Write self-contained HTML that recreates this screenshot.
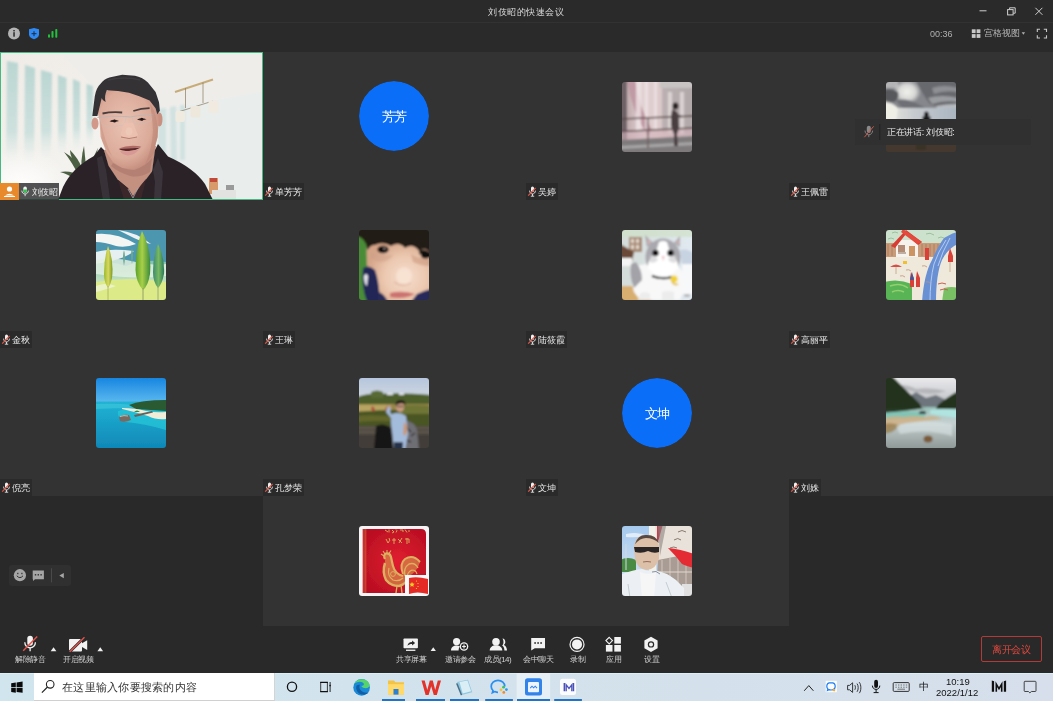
<!DOCTYPE html>
<html><head><meta charset="utf-8">
<style>
*{margin:0;padding:0;box-sizing:border-box}
html,body{width:1053px;height:701px;overflow:hidden;background:#292929;font-family:"Liberation Sans",sans-serif;position:relative}
.abs{position:absolute}
#title{left:0;top:0;width:1053px;height:22px;background:#2a2a2a}
#titleline{left:0;top:22px;width:1053px;height:1px;background:#323232}
#toolbar{left:0;top:23px;width:1053px;height:29px;background:#2a2a2a}
.t{position:absolute;white-space:nowrap;line-height:1;will-change:transform}
.tile{position:absolute;background:#333333;width:263px;height:148px}
.av{position:absolute;width:70px;height:70px;border-radius:3px;overflow:hidden}
.lbl{position:absolute;height:17px;background:#2a2a2a;color:#e8e8e8;font-size:9px;line-height:19px;padding:0 2.5px 0 11.5px;white-space:nowrap;will-change:transform}
.lbl svg{position:absolute;left:1px;top:3px}
#bottombar{left:0;top:626px;width:1053px;height:47px;background:#292929}
.bl{font-size:8px;letter-spacing:-0.5px;color:#cfcfcf}
#taskbar{left:0;top:673px;width:1053px;height:28px;background:linear-gradient(90deg,#d0e5ee 0%,#d3e2ec 50%,#d6dfeb 100%);border-top:1px solid #d9eef7}
</style></head>
<body>
<div id="title" class="abs"></div>
<div class="t" style="left:488px;top:8px;font-size:9px;letter-spacing:0.5px;color:#dcdcdc">刘伎昭的快速会议</div>
<svg class="abs" style="left:975px;top:4px" width="75" height="16" viewBox="975 4 75 16">
 <line x1="979.5" y1="10.8" x2="986.5" y2="10.8" stroke="#cfcfcf" stroke-width="1"/>
 <rect x="1007.6" y="9.6" width="5.5" height="5.3" fill="none" stroke="#cfcfcf" stroke-width="1"/>
 <path d="M1009.6 9.6V7.8h5.6v5.4h-2" fill="none" stroke="#cfcfcf" stroke-width="1"/>
 <path d="M1035.4 7.8l7 7M1042.4 7.8l-7 7" stroke="#cfcfcf" stroke-width="1"/>
</svg>
<div id="titleline" class="abs"></div>
<div id="toolbar" class="abs"></div>
<svg class="abs" style="left:0;top:23px" width="70" height="29" viewBox="0 23 70 29">
 <circle cx="14" cy="33.5" r="6" fill="#b4b4b4"/>
 <rect x="13.2" y="32.2" width="1.7" height="4.5" fill="#3a3a3a"/>
 <rect x="13.2" y="30" width="1.7" height="1.4" fill="#3a3a3a"/>
 <path d="M29 29.2 L34 28 L39 29.2 V34.5 C39 37 36.5 38.5 34 39.2 C31.5 38.5 29 37 29 34.5Z" fill="#2f8af5"/>
 <path d="M34 31.2V36.2M31.5 33.7H36.5" stroke="#1c2b3d" stroke-width="1"/>
 <rect x="48" y="34.2" width="2" height="3.6" rx="1" fill="#22c33c"/>
 <rect x="51.5" y="31" width="2" height="6.8" rx="0.8" fill="#22c33c"/>
 <rect x="55.3" y="28.9" width="2" height="8.9" rx="0.8" fill="#22c33c"/>
</svg>
<div class="t" style="left:930px;top:30px;font-size:9px;color:#b0b0b0">00:36</div>
<svg class="abs" style="left:970px;top:27px" width="80" height="14" viewBox="970 27 80 14">
 <rect x="971.8" y="29.3" width="3.8" height="3.8" fill="#c8c8c8"/>
 <rect x="976.6" y="29.3" width="3.8" height="3.8" fill="#c8c8c8"/>
 <rect x="971.8" y="34.1" width="3.8" height="3.8" fill="#c8c8c8"/>
 <rect x="976.6" y="34.1" width="3.8" height="3.8" fill="#c8c8c8"/>
 <path d="M1021.7 32.2h3.4l-1.7 2.5z" fill="#b0b0b0"/>
 <path d="M1037.3 32V29.3H1040M1043.8 29.3H1046.5V32M1046.5 35.3V38H1043.8M1040 38H1037.3V35.3" fill="none" stroke="#c8c8c8" stroke-width="1.1"/>
</svg>
<div class="t" style="left:984px;top:29px;font-size:8.5px;color:#b8b8b8">宫格视图</div>

<div class="abs" style="left:263px;top:52px;width:1px;height:574px;background:#2f2f2f"></div>
<div class="abs" style="left:526px;top:52px;width:1px;height:574px;background:#2f2f2f"></div>
<div class="abs" style="left:789px;top:52px;width:1px;height:444px;background:#2f2f2f"></div>
<div class="abs" style="left:0;top:199px;width:1053px;height:1px;background:#2f2f2f"></div>
<div class="abs" style="left:0;top:347px;width:1053px;height:1px;background:#2f2f2f"></div>
<div class="abs" style="left:263px;top:495px;width:526px;height:1px;background:#2f2f2f"></div>

<!-- VIDEO TILE -->
<svg class="abs" style="left:0;top:52px" width="263" height="148" viewBox="0 52 263 148">
 <defs>
  <linearGradient id="vbg" x1="0" y1="0" x2="1" y2="1">
   <stop offset="0" stop-color="#efebe6"/><stop offset="0.5" stop-color="#f4f2ee"/><stop offset="1" stop-color="#e9ecea"/>
  </linearGradient>
  <linearGradient id="stripefade" x1="0" y1="0" x2="0" y2="1">
   <stop offset="0" stop-color="#bad6d2" stop-opacity="1"/><stop offset="0.65" stop-color="#c8dedb" stop-opacity="0.85"/><stop offset="1" stop-color="#eef4f2" stop-opacity="0"/>
  </linearGradient>
  <radialGradient id="glow" cx="0.2" cy="0.85" r="0.5">
   <stop offset="0" stop-color="#ffffff" stop-opacity="1"/><stop offset="1" stop-color="#ffffff" stop-opacity="0"/>
  </radialGradient>
  <radialGradient id="face" cx="0.45" cy="0.45" r="0.6">
   <stop offset="0" stop-color="#e9c2b2"/><stop offset="0.7" stop-color="#dcab9a"/><stop offset="1" stop-color="#c48c7c"/>
  </radialGradient>
  <filter id="soft" x="-5%" y="-5%" width="110%" height="110%"><feGaussianBlur stdDeviation="0.7"/></filter>
  <filter id="soft2" x="-10%" y="-10%" width="120%" height="120%"><feGaussianBlur stdDeviation="0.8"/></filter>
 </defs>
 <g filter="url(#soft)">
 <rect x="0" y="52" width="263" height="148" fill="url(#vbg)"/>
 <!-- ceiling right/wall line -->
 <path d="M160 110 L263 91 V200 H160z" fill="#e9edec"/>
 <path d="M60 52 H263 V91 L160 110 L95 88z" fill="#eeedea"/>
 <!-- stripes left -->
 <g fill="url(#stripefade)" filter="url(#soft2)">
  <path d="M7 61 L18 63 L17 170 L6 170z"/>
  <path d="M25 65 L35 68 L34 170 L24 170z"/>
  <path d="M41 70 L52 73 L51 165 L41 165z"/>
  <path d="M58 75 L66.5 78 L66 160 L58 160z"/>
  <path d="M73 79 L80 82 L80 155 L73 155z"/>
  <path d="M86.5 84 L93 86 L93 150 L86.5 150z"/>
 </g>
 <g fill="#d2e2e0" filter="url(#soft2)">
  <path d="M158 109 L166 108 L166 163 L158 163z"/>
  <path d="M170 107 L176 106 L177 162 L171 162z"/>
  <path d="M180 105 L185 105 L185 160 L180 160z"/>
 </g>
 <rect x="0" y="120" width="100" height="80" fill="url(#glow)"/>
 <!-- plant -->
 <g fill="#3a5230" opacity="0.9">
  <path d="M80 178 Q72 162 64 152 Q78 160 84 174z"/>
  <path d="M82 176 Q80 160 84 146 Q86 162 86 176z"/>
  <path d="M85 175 Q92 160 101 150 Q96 166 89 177z"/>
  <path d="M76 180 Q68 174 60 172 Q72 170 80 177z"/>
  <path d="M88 177 Q96 170 103 167 Q97 176 90 181z"/>
  <path d="M78 168 Q70 158 70 150 Q78 158 82 168z"/>
  <path d="M88 168 Q94 156 98 148 Q96 160 90 170z"/>
 </g>
 <!-- lamp -->
 <path d="M175 92 L213 79.5" stroke="#c8ac78" stroke-width="2"/>
 <path d="M185.5 88 V108 M203 82.5 V103" stroke="#8a7a60" stroke-width="0.7"/>
 <path d="M178 112 L213 101" stroke="#8a7a60" stroke-width="0.7"/>
 <rect x="175.5" y="111" width="9.5" height="11" rx="2" fill="#f0ebe0"/>
 <rect x="190.5" y="106" width="10" height="11.5" rx="2" fill="#eee8dc"/>
 <rect x="208.5" y="100.6" width="10" height="12.4" rx="2" fill="#f0eae0"/>
 <!-- objects bottom right -->
 <rect x="209" y="178" width="9" height="16" fill="#d89a6a"/>
 <rect x="210" y="178" width="7" height="4" fill="#c04a3a"/>
 <rect x="212" y="190" width="24" height="10" fill="#e2e2e0"/>
 <rect x="226" y="185" width="8" height="5" fill="#9a9a9a"/>
 <!-- neck -->
 <path d="M104 150 L156 146 L152 172 L141 186 L133 197 L118 180 L108 166z" fill="#c4907f"/>
 <path d="M113 163 Q124 170 134 170 Q146 166 152 158 L150 172 Q140 178 130 176 Q118 172 111 166z" fill="#a8766a" opacity="0.6"/>
 <!-- jacket -->
 <path d="M58 200 L63 187 Q72 168 94 156 L101 147 L104 150 L108.5 165.7 L117.7 179.4 L128 188.5 L133.7 200z" fill="#2a2428"/>
 <path d="M136 200 L141.7 185 L152 171.4 L155 150 L158 144 L168 156.5 Q194 168 205 184 L213 200z" fill="#2a2428"/>
 <path d="M97 158 L102 156 L106 170 L110 200 L103 200 L99 175z" fill="#4a464e" opacity="0.45"/>
 <path d="M153 170 L158 158 L163 172 L161 200 L154 200 L155 182z" fill="#4e4a50" opacity="0.45"/>
 <path d="M118 180 L128 188 L133 196 L141 185 L146 179 L141 200 L124 200z" fill="#3a262c"/>
 <path d="M128 189 L133 198 L138 188" stroke="#a6a6ac" stroke-width="0.8" fill="none"/>
 <!-- ears -->
 <ellipse cx="95" cy="123.5" rx="3.5" ry="6" fill="#d2998a"/>
 <ellipse cx="159.5" cy="119.5" rx="3" ry="7" fill="#c98f80"/>
 <!-- face -->
 <path d="M97 110 Q98 92 112 89 Q132 86 150 96 Q159 104 158.8 120 L157.6 137 L153 154.2 L145 164.5 L133.7 169 L122.2 168 L113 162.2 L106.3 152 L100.6 137 L99.4 120z" fill="url(#face)"/>
 <path d="M100 118 Q104 140 112 156 Q106 150 102 140z" fill="#c89080" opacity="0.5"/>
 <!-- hair -->
 <path d="M92.3 116 L94.8 96.2 Q96 88 100.8 83.4 Q104 79 109.4 77.4 L122.2 74.8 L135 75.7 Q142 77 147.9 82.5 L155.6 92 L159 102.2 L159.9 110.8 L157.3 114.2 L155.6 108.2 L149.6 100.5 L139.3 96.2 L129 92.8 L118 91 L106.8 90.2 Q104 96 105.6 102 Q102 100 101.7 98 L97.4 116z" fill="#343034"/>
 <path d="M108 80 Q125 76 140 80" stroke="#4a4648" stroke-width="1.5" fill="none" opacity="0.6"/>
 <!-- eyebrows -->
 <path d="M102.5 113.5 Q112 111.5 122.2 112.5" stroke="#4a3e3c" stroke-width="1.8" fill="none"/>
 <path d="M133.3 111 Q141 108.5 149.6 108.2" stroke="#4a3e3c" stroke-width="1.8" fill="none"/>
 <!-- glasses -->
 <path d="M97.4 117.5 Q112 115.5 126 116.5 L130 117 Q140 115 153 114.5" fill="none" stroke="#c0b6b2" stroke-width="0.9"/>
 <path d="M100 118 Q101 124 104 126 Q114 127 124 125 Q126 120 126 117 M132 117 Q133 122 135 124 Q145 124 151 121 Q153 117 153 114.5" fill="none" stroke="#c8beba" stroke-width="0.6" opacity="0.8"/>
 <!-- eyes -->
 <path d="M109.5 121.2 Q114 118.6 119 121 Q114 123 109.5 121.2z" fill="#3a2a2a"/>
 <circle cx="114.5" cy="120.9" r="1.5" fill="#221818"/>
 <path d="M137 119.5 Q141.5 117 146.5 119.3 Q141.5 121.4 137 119.5z" fill="#3a2a2a"/>
 <circle cx="141.8" cy="119.3" r="1.5" fill="#221818"/>
 <path d="M150 104 Q158 114 157.6 137 L153 154.2 L145 164.5 Q152 150 153 130 Q152 114 150 104z" fill="#b88070" opacity="0.45"/>
 <!-- nose -->
 <path d="M124 123 Q122 130 120.5 135 Q125 139 130 138.5 Q135 139 138 135 Q135 128 133 123z" fill="#ecc0ae"/>
 <ellipse cx="129" cy="131.5" rx="3.5" ry="4" fill="#f0cfbf" opacity="0.5"/>
 <path d="M121 137 Q129 140 137 137" stroke="#b27868" stroke-width="0.9" fill="none"/>
 <!-- mouth -->
 <path d="M118.8 148.5 Q128 144.5 141.6 146.5 Q135 148 129 149.5 Q122 150 118.8 148.5z" fill="#b06a66"/>
 <path d="M119 149 Q129 148.5 141 147.5 Q136 150.5 129 151 Q122 151 119 149z" fill="#5a2a2c"/>
 <path d="M120 151 Q130 152 139 149.5 Q134 155.4 128 155.4 Q122 155 120 151z" fill="#d89894"/>
 </g>
 <rect x="0.5" y="52.5" width="262" height="147" fill="none" stroke="#45b982" stroke-width="1"/>
</svg>
<div class="abs" style="left:0;top:183px;width:19px;height:17px;background:#e8892c"></div>
<svg class="abs" style="left:0;top:183px" width="19" height="17" viewBox="0 0 19 17"><circle cx="9.5" cy="6" r="2.6" fill="#fff"/><path d="M5 12.5 Q9.5 8.8 14 12.5z" fill="#fff"/><rect x="4" y="13" width="11" height="1" fill="#fff"/></svg>
<div class="lbl" style="left:19px;top:182.5px;height:17px;background:rgba(44,44,46,0.82);padding-left:12.5px;padding-right:1.5px;letter-spacing:-0.3px"><svg width="10" height="11" viewBox="0 0 10 11"><rect x="3.3" y="0.6" width="3.6" height="6.2" rx="1.8" fill="#f2f2f2"/><path d="M3.3 3.6h3.6v1.4a1.8 1.8 0 0 1-3.6 0z" fill="#2fc64e"/><path d="M1.8 4.6c0 2 1.5 3.4 3.3 3.4s3.3-1.4 3.3-3.4" fill="none" stroke="#e8e8e8" stroke-width="0.9"/><path d="M5.1 8v2.2" stroke="#e8e8e8" stroke-width="0.9"/></svg>刘伎昭</div>

<!-- GRID -->
<div class="tile" style="left:263px;top:52px"></div>
<div class="tile" style="left:526px;top:52px"></div>
<div class="tile" style="left:789px;top:52px;width:264px"></div>
<div class="tile" style="left:0;top:200px"></div>
<div class="tile" style="left:263px;top:200px"></div>
<div class="tile" style="left:526px;top:200px"></div>
<div class="tile" style="left:789px;top:200px;width:264px"></div>
<div class="tile" style="left:0;top:348px"></div>
<div class="tile" style="left:263px;top:348px"></div>
<div class="tile" style="left:526px;top:348px"></div>
<div class="tile" style="left:789px;top:348px;width:264px"></div>
<div class="tile" style="left:263px;top:496px;height:130px"></div>
<div class="tile" style="left:526px;top:496px;height:130px"></div>

<!-- LABELS -->
<div class="lbl" style="left:263px;top:183px"><svg width="10" height="11" viewBox="0 0 10 11"><rect x="4" y="0.5" width="3" height="5.5" rx="1.5" fill="#f0f0f0"/><path d="M2.6 4.6c0 2 1.3 3.3 2.9 3.3s2.9-1.3 2.9-3.3" fill="none" stroke="#e8e8e8" stroke-width="0.9"/><path d="M5.5 7.9v2.2M3.8 10.2h3.4" stroke="#e8e8e8" stroke-width="0.9"/><path d="M1.2 9.6L8.6 1.8" stroke="#e05a4a" stroke-width="1.2"/></svg>单芳芳</div>
<div class="lbl" style="left:526px;top:183px"><svg width="10" height="11" viewBox="0 0 10 11"><rect x="4" y="0.5" width="3" height="5.5" rx="1.5" fill="#f0f0f0"/><path d="M2.6 4.6c0 2 1.3 3.3 2.9 3.3s2.9-1.3 2.9-3.3" fill="none" stroke="#e8e8e8" stroke-width="0.9"/><path d="M5.5 7.9v2.2M3.8 10.2h3.4" stroke="#e8e8e8" stroke-width="0.9"/><path d="M1.2 9.6L8.6 1.8" stroke="#e05a4a" stroke-width="1.2"/></svg>吴婷</div>
<div class="lbl" style="left:789px;top:183px"><svg width="10" height="11" viewBox="0 0 10 11"><rect x="4" y="0.5" width="3" height="5.5" rx="1.5" fill="#f0f0f0"/><path d="M2.6 4.6c0 2 1.3 3.3 2.9 3.3s2.9-1.3 2.9-3.3" fill="none" stroke="#e8e8e8" stroke-width="0.9"/><path d="M5.5 7.9v2.2M3.8 10.2h3.4" stroke="#e8e8e8" stroke-width="0.9"/><path d="M1.2 9.6L8.6 1.8" stroke="#e05a4a" stroke-width="1.2"/></svg>王佩雷</div>
<div class="lbl" style="left:0px;top:331px"><svg width="10" height="11" viewBox="0 0 10 11"><rect x="4" y="0.5" width="3" height="5.5" rx="1.5" fill="#f0f0f0"/><path d="M2.6 4.6c0 2 1.3 3.3 2.9 3.3s2.9-1.3 2.9-3.3" fill="none" stroke="#e8e8e8" stroke-width="0.9"/><path d="M5.5 7.9v2.2M3.8 10.2h3.4" stroke="#e8e8e8" stroke-width="0.9"/><path d="M1.2 9.6L8.6 1.8" stroke="#e05a4a" stroke-width="1.2"/></svg>金秋</div>
<div class="lbl" style="left:263px;top:331px"><svg width="10" height="11" viewBox="0 0 10 11"><rect x="4" y="0.5" width="3" height="5.5" rx="1.5" fill="#f0f0f0"/><path d="M2.6 4.6c0 2 1.3 3.3 2.9 3.3s2.9-1.3 2.9-3.3" fill="none" stroke="#e8e8e8" stroke-width="0.9"/><path d="M5.5 7.9v2.2M3.8 10.2h3.4" stroke="#e8e8e8" stroke-width="0.9"/><path d="M1.2 9.6L8.6 1.8" stroke="#e05a4a" stroke-width="1.2"/></svg>王琳</div>
<div class="lbl" style="left:526px;top:331px"><svg width="10" height="11" viewBox="0 0 10 11"><rect x="4" y="0.5" width="3" height="5.5" rx="1.5" fill="#f0f0f0"/><path d="M2.6 4.6c0 2 1.3 3.3 2.9 3.3s2.9-1.3 2.9-3.3" fill="none" stroke="#e8e8e8" stroke-width="0.9"/><path d="M5.5 7.9v2.2M3.8 10.2h3.4" stroke="#e8e8e8" stroke-width="0.9"/><path d="M1.2 9.6L8.6 1.8" stroke="#e05a4a" stroke-width="1.2"/></svg>陆筱霞</div>
<div class="lbl" style="left:789px;top:331px"><svg width="10" height="11" viewBox="0 0 10 11"><rect x="4" y="0.5" width="3" height="5.5" rx="1.5" fill="#f0f0f0"/><path d="M2.6 4.6c0 2 1.3 3.3 2.9 3.3s2.9-1.3 2.9-3.3" fill="none" stroke="#e8e8e8" stroke-width="0.9"/><path d="M5.5 7.9v2.2M3.8 10.2h3.4" stroke="#e8e8e8" stroke-width="0.9"/><path d="M1.2 9.6L8.6 1.8" stroke="#e05a4a" stroke-width="1.2"/></svg>高丽平</div>
<div class="lbl" style="left:0px;top:479px"><svg width="10" height="11" viewBox="0 0 10 11"><rect x="4" y="0.5" width="3" height="5.5" rx="1.5" fill="#f0f0f0"/><path d="M2.6 4.6c0 2 1.3 3.3 2.9 3.3s2.9-1.3 2.9-3.3" fill="none" stroke="#e8e8e8" stroke-width="0.9"/><path d="M5.5 7.9v2.2M3.8 10.2h3.4" stroke="#e8e8e8" stroke-width="0.9"/><path d="M1.2 9.6L8.6 1.8" stroke="#e05a4a" stroke-width="1.2"/></svg>倪亮</div>
<div class="lbl" style="left:263px;top:479px"><svg width="10" height="11" viewBox="0 0 10 11"><rect x="4" y="0.5" width="3" height="5.5" rx="1.5" fill="#f0f0f0"/><path d="M2.6 4.6c0 2 1.3 3.3 2.9 3.3s2.9-1.3 2.9-3.3" fill="none" stroke="#e8e8e8" stroke-width="0.9"/><path d="M5.5 7.9v2.2M3.8 10.2h3.4" stroke="#e8e8e8" stroke-width="0.9"/><path d="M1.2 9.6L8.6 1.8" stroke="#e05a4a" stroke-width="1.2"/></svg>孔梦荣</div>
<div class="lbl" style="left:526px;top:479px"><svg width="10" height="11" viewBox="0 0 10 11"><rect x="4" y="0.5" width="3" height="5.5" rx="1.5" fill="#f0f0f0"/><path d="M2.6 4.6c0 2 1.3 3.3 2.9 3.3s2.9-1.3 2.9-3.3" fill="none" stroke="#e8e8e8" stroke-width="0.9"/><path d="M5.5 7.9v2.2M3.8 10.2h3.4" stroke="#e8e8e8" stroke-width="0.9"/><path d="M1.2 9.6L8.6 1.8" stroke="#e05a4a" stroke-width="1.2"/></svg>文坤</div>
<div class="lbl" style="left:789px;top:479px"><svg width="10" height="11" viewBox="0 0 10 11"><rect x="4" y="0.5" width="3" height="5.5" rx="1.5" fill="#f0f0f0"/><path d="M2.6 4.6c0 2 1.3 3.3 2.9 3.3s2.9-1.3 2.9-3.3" fill="none" stroke="#e8e8e8" stroke-width="0.9"/><path d="M5.5 7.9v2.2M3.8 10.2h3.4" stroke="#e8e8e8" stroke-width="0.9"/><path d="M1.2 9.6L8.6 1.8" stroke="#e05a4a" stroke-width="1.2"/></svg>刘姝</div>

<!-- AVATARS -->
<div class="av" id="av-fangfang" style="left:359px;top:81px;border-radius:50%"><div style="width:70px;height:70px;border-radius:50%;background:#0a6ef8;color:#fff;font-size:13px;line-height:72px;text-align:center;letter-spacing:-0.5px;will-change:transform">芳芳</div></div>
<div class="av" id="av-wuting" style="left:622px;top:82px"><svg width="70" height="70" viewBox="0 0 70 70"><defs><filter id="bwt" filterUnits="userSpaceOnUse" x="0" y="0" width="70" height="70"><feGaussianBlur edgeMode="duplicate" stdDeviation="0.9"/></filter>
<linearGradient id="wtbg" x1="0" x2="1"><stop offset="0" stop-color="#b09a9e"/><stop offset="0.3" stop-color="#e2d2d4"/><stop offset="0.55" stop-color="#dccaca"/><stop offset="1" stop-color="#b4aaaa"/></linearGradient></defs>
<g filter="url(#bwt)">
<rect x="-2" y="-2" width="74" height="74" fill="url(#wtbg)"/>
<path d="M-2 -2h7v60h-7z" fill="#6e6266"/>
<path d="M5 -2 L13 -2 Q17 25 30 48 L26 54 Q10 30 5 -2z" fill="#c09aa4"/>
<path d="M14 -2 h5 v52 h-5z" fill="#f0e6e8" opacity="0.75"/>
<path d="M23 -2 h3 v50 h-3z M32 -2 h3 v50 h-3z" fill="#f2eaec" opacity="0.6"/>
<path d="M38 -2 h34 v8 h-34z" fill="#c8c4c4"/>
<path d="M40 6 h30 v44 h-30z" fill="#aea6a8" opacity="0.7"/>
<path d="M46 10 h4 v42 h-4z M58 10 h4 v42 h-4z" fill="#e4dcdc" opacity="0.8"/>
<path d="M-2 49 L72 46 V58 L-2 62z" fill="#d4b4bc" opacity="0.6"/>
<path d="M-2 58 L72 54 V72 H-2z" fill="#7e7a7c"/>
<path d="M-2 64 L72 60 V63 L-2 67z" fill="#a8a6a6"/>
<path d="M-2 37 L72 34" stroke="#5a4646" stroke-width="1.6"/>
<path d="M-2 49.5 L72 46" stroke="#5a4646" stroke-width="1.5"/>
<path d="M26 36 V66" stroke="#6a5a5a" stroke-width="1.3"/>
<ellipse cx="53.5" cy="24" rx="3" ry="3.6" fill="#2a2224"/>
<path d="M51 25 L50.5 31 L52 31z" fill="#2a2224"/>
<path d="M50 28 Q56 28 56.5 34 L57 46 L55 52 L56 64 L52 64 L52 52 L49 44 L49 34z" fill="#4a3e40"/>
<path d="M55 32 L60 34 L59 35.5 L55 34z" fill="#4a3e40"/>
</g></svg></div>
<div class="av" id="av-wangpeilei" style="left:886px;top:82px"><svg width="70" height="70" viewBox="0 0 70 70"><defs><filter id="bwp" filterUnits="userSpaceOnUse" x="0" y="0" width="70" height="70"><feGaussianBlur edgeMode="duplicate" stdDeviation="1.3"/></filter>
<radialGradient id="wpb" cx="0.5" cy="0.5" r="0.5"><stop offset="0" stop-color="#f0f0ec"/><stop offset="0.6" stop-color="#d8d8d6"/><stop offset="1" stop-color="#d8d8d6" stop-opacity="0"/></radialGradient>
<linearGradient id="wph" x1="0" y1="0" x2="1" y2="0"><stop offset="0" stop-color="#ecebe2"/><stop offset="0.4" stop-color="#c8ccd0"/><stop offset="1" stop-color="#a8b4c0"/></linearGradient></defs>
<g filter="url(#bwp)">
<rect x="-2" y="-2" width="74" height="74" fill="#85878c"/>
<path d="M30 -2 H72 V30 Q56 26 44 22 Q36 12 30 -2z" fill="#68696e"/>
<path d="M46 6 Q58 2 72 6 V10 Q58 8 48 12z" fill="#8e9094"/>
<path d="M42 16 Q56 12 72 16 V20 Q58 18 46 22z" fill="#9a9ca0"/>
<path d="M50 24 Q60 22 72 22 V26 Q60 26 52 28z" fill="#b8bcc0"/>
<rect x="-2" y="-2" width="14" height="8" fill="#b4b4b6"/>
<ellipse cx="21" cy="10" rx="14" ry="12" fill="url(#wpb)"/>
<path d="M-2 8 Q6 6 12 10 Q14 16 8 20 Q2 20 -2 18z" fill="#56585c"/>
<path d="M10 18 Q22 16 32 22 Q40 26 46 30 Q36 32 24 30 Q14 26 10 18z" fill="#6e7074"/>
<path d="M-2 26 H72 V40 H-2z" fill="url(#wph)"/>
<path d="M-2 20 Q6 20 12 26 L10 40 H-2z" fill="#f0efe6"/>
<ellipse cx="40.4" cy="32.5" rx="2.4" ry="3" fill="#141414"/>
<rect x="36.5" y="34.5" width="8" height="5" fill="#141414"/>
<rect x="-2" y="58" width="74" height="14" fill="#44382e"/>
<path d="M-2 58 H72 V61 H-2z" fill="#54483c"/>
<path d="M30 62 h10 v6 h-10z" fill="#3a3028"/>
</g></svg></div>
<div class="av" id="av-jinqiu" style="left:96px;top:230px"><svg width="70" height="70" viewBox="0 0 70 70"><defs><filter id="bjq" filterUnits="userSpaceOnUse" x="0" y="0" width="70" height="70"><feGaussianBlur edgeMode="duplicate" stdDeviation="0.5"/></filter></defs><g filter="url(#bjq)">
<defs><linearGradient id="jqg" x1="0" y1="0" x2="0" y2="1"><stop offset="0" stop-color="#7fbfb0"/><stop offset="0.5" stop-color="#bfe0c0"/><stop offset="1" stop-color="#e2ec90"/></linearGradient>
<linearGradient id="tr1" x1="0" x2="1"><stop offset="0" stop-color="#9ab828"/><stop offset="0.5" stop-color="#d8d860"/><stop offset="1" stop-color="#7a9a20"/></linearGradient>
<linearGradient id="tr2" x1="0" x2="1"><stop offset="0" stop-color="#5aa028"/><stop offset="0.45" stop-color="#a8d048"/><stop offset="1" stop-color="#3a8a38"/></linearGradient>
<linearGradient id="tr3" x1="0" x2="1"><stop offset="0" stop-color="#3a8a70"/><stop offset="0.5" stop-color="#78b860"/><stop offset="1" stop-color="#2a7a58"/></linearGradient></defs>
<rect width="70" height="70" fill="#f2f4f0"/>
<rect y="30" width="70" height="40" fill="url(#jqg)"/>
<path d="M0 0 H70 V32 Q50 28 30 36 Q15 30 0 34z" fill="#4e96b0"/>
<path d="M0 4 Q20 2 40 14 Q30 18 20 16 Q8 12 0 12z" fill="#f4f6f4"/>
<path d="M22 0 Q40 2 55 14 Q45 12 30 4z" fill="#eef2f2"/>
<path d="M0 22 Q15 18 38 21 Q28 30 0 34z" fill="#eef4f4" opacity="0.95"/>
<path d="M0 30 Q20 26 40 32 Q60 36 70 34 V46 Q40 50 0 44z" fill="#e2f0e0" opacity="0.85"/>
<path d="M0 52 Q35 46 70 52 V70 H0z" fill="#dcea88"/>
<path d="M0 56 Q10 52 20 56 Q8 60 0 62z" fill="#f0f4d8" opacity="0.8"/>
<path d="M28 20 Q30 26 28 36 Q26 26 28 20z M36 18 Q38 24 36 34 Q34 24 36 18z" fill="#6aa890"/>
<path d="M12 16 Q18 30 16 48 Q14 56 12 58 Q8 52 8 44 Q8 28 12 16z" fill="url(#tr1)"/>
<path d="M12 56 V70" stroke="#a8b060" stroke-width="0.8"/>
<path d="M46 1 Q56 20 54 44 Q52 56 47 60 Q40 52 39.5 40 Q40 16 46 1z" fill="url(#tr2)"/>
<path d="M47 58 V70" stroke="#8a9a60" stroke-width="0.9"/>
<path d="M62 14 Q69 28 68 44 Q66 54 62 58 Q57 52 57 42 Q57 26 62 14z" fill="url(#tr3)"/>
<path d="M62 56 V70" stroke="#8aa080" stroke-width="0.8"/>
</g></svg></div>
<div class="av" id="av-wanglin" style="left:359px;top:230px"><svg width="70" height="70" viewBox="0 0 70 70"><defs><filter id="bwl" filterUnits="userSpaceOnUse" x="0" y="0" width="70" height="70"><feGaussianBlur edgeMode="duplicate" stdDeviation="0.9"/></filter>
<radialGradient id="wlf" cx="0.6" cy="0.6" r="0.6"><stop offset="0" stop-color="#f6dece"/><stop offset="0.55" stop-color="#ecc8b0"/><stop offset="1" stop-color="#d4a488"/></radialGradient></defs>
<g filter="url(#bwl)">
<rect x="-2" y="-2" width="74" height="74" fill="#3a7a2e"/>
<path d="M-2 -2 h10 v74 h-10z" fill="#4a8c38"/>
<path d="M8 10 Q30 8 72 12 V72 H22 Q12 60 9 45 Q7 30 8 10z" fill="url(#wlf)"/>
<path d="M10 22 Q20 26 34 25 Q30 32 20 32 Q12 30 10 22z" fill="#d0a088" opacity="0.55"/>
<path d="M52 24 Q60 30 72 28 V36 Q62 36 54 32z" fill="#c8967c" opacity="0.55"/>
<path d="M4 38 Q10 34 16 40 Q20 50 21 72 H8 Q2 56 4 38z" fill="#222656"/>
<path d="M5 46 Q7 42 9 46 L8 56 Q5 54 5 46z" fill="#e8e8f0"/>
<path d="M19 62 Q25 63 29 72 H19z" fill="#262a58"/>
<path d="M58 64 Q64 61 72 59 V72 H52z" fill="#282c5a"/>
<path d="M-2 -2 H72 V24 Q66 16 60 21 Q54 13 46 18 Q40 11 32 16 Q24 11 16 15 Q11 15 9 20 L8 18 Q6 8 -2 6z" fill="#241a16"/>
<path d="M60 20 Q67 18 72 24 V28 Q66 26 60 24z" fill="#241a16"/>
<ellipse cx="24" cy="19.5" rx="5.6" ry="3.8" fill="#100808"/>
<ellipse cx="25.5" cy="18.6" rx="1.2" ry="1" fill="#b0a098"/>
<ellipse cx="66.5" cy="25" rx="4.5" ry="3.6" fill="#100808"/>
<ellipse cx="45" cy="46" rx="8" ry="9" fill="#fae6d6" opacity="0.7"/>
<path d="M35 52 Q43 58 52 53" stroke="#d0a088" stroke-width="1.4" fill="none" opacity="0.6"/>
<path d="M31 63 Q43 60 56 64 Q45 70 31 67z" fill="#cc7270"/>
</g></svg></div>
<div class="av" id="av-luxiaoxia" style="left:622px;top:230px"><svg width="70" height="70" viewBox="0 0 70 70"><defs><filter id="blx" filterUnits="userSpaceOnUse" x="0" y="0" width="70" height="70"><feGaussianBlur edgeMode="duplicate" stdDeviation="0.8"/></filter>
<linearGradient id="lxbg" x1="0" y1="0" x2="1" y2="0"><stop offset="0" stop-color="#d4dcd8"/><stop offset="1" stop-color="#e2eaf2"/></linearGradient></defs>
<g filter="url(#blx)">
<rect x="-2" y="-2" width="74" height="74" fill="url(#lxbg)"/>
<rect x="-2" y="-2" width="74" height="9" fill="#cfe0c8" opacity="0.7"/>
<rect x="7" y="7" width="13" height="15" fill="#a48670"/>
<path d="M9 9h3v4h-3zM14 9h3v4h-3zM9 15h3v4h-3zM14 15h3v4h-3z" fill="#e4d8cc"/>
<path d="M-2 14 L12 22 L10 32 L-2 28z" fill="#6a4a38"/>
<rect x="-2" y="28" width="12" height="8" fill="#f4f4f4"/>
<path d="M-2 56 H26 L30 72 H-2z" fill="#d8ae70"/>
<path d="M58 20 Q66 18 72 24 V34 L60 34z" fill="#b8c4d8" opacity="0.6"/>
<path d="M60 34 H72 V64 H60z" fill="#f6f8fa"/>
<path d="M12 36 Q8 50 12 62 L18 70 H58 L62 60 Q64 46 58 38 Q40 30 12 36z" fill="#f8f8f8"/>
<path d="M9 34 Q7 46 12 58 L20 50 Q20 40 14 32z" fill="#a2a2a8"/>
<ellipse cx="41" cy="27" rx="17.5" ry="18.5" fill="#a8a8ae"/>
<path d="M23 5 L31 13 L25 17z" fill="#a4a4aa"/>
<path d="M25.5 8 L29 13 L26 14.5z" fill="#dcb4b4"/>
<path d="M58 6 L52 13 L58 17z" fill="#a4a4aa"/>
<path d="M57 9 L54 13 L57 14.5z" fill="#dcb4b4"/>
<path d="M37 12 Q41 10 45 12 L48 22 Q57 30 56 38 Q50 46 41 46 Q32 46 26 38 Q25 30 34 22z" fill="#ffffff"/>
<path d="M27 26 Q33 24 36 30 Q32 34 28 32z M55 26 Q49 24 46 30 Q50 34 54 32z" fill="#c8c8cc" opacity="0.6"/>
<ellipse cx="33.5" cy="23" rx="3.2" ry="3.2" fill="#111"/>
<ellipse cx="48.5" cy="23" rx="3.2" ry="3.2" fill="#111"/>
<path d="M39.5 26.5h3.4l-1.7 2z" fill="#e88a98"/>
<path d="M41.2 28.5 v2" stroke="#d08a90" stroke-width="0.6"/>
<path d="M30 46 Q40 50 50 47" stroke="#111" stroke-width="2" fill="none"/>
<circle cx="52" cy="49" r="3.6" fill="#f2d230"/>
<path d="M50 51 Q52 56 56 54" stroke="#e0b820" stroke-width="1.6" fill="none"/>
<path d="M18 64 Q22 60 28 64 L28 70 H16z M40 62 Q46 60 52 62 L52 70 H40z" fill="#ececec"/>
<rect x="62" y="64" width="6" height="3" rx="1.5" fill="#b8b8b8"/>
</g></svg></div>
<div class="av" id="av-gaoliping" style="left:886px;top:230px"><svg width="70" height="70" viewBox="0 0 70 70"><defs><filter id="bgl" filterUnits="userSpaceOnUse" x="0" y="0" width="70" height="70"><feGaussianBlur edgeMode="duplicate" stdDeviation="0.6"/></filter></defs>
<g filter="url(#bgl)">
<rect x="-2" y="-2" width="74" height="74" fill="#efe9dc"/>
<rect x="-2" y="-2" width="74" height="15" fill="#cce2cc"/>
<path d="M6 3 q3 -2 6 0 M40 4 q4 -2 8 1 M52 8 q3 -2 6 0 M2 9 q3 -2 6 0" stroke="#9cc0a0" stroke-width="1" fill="none"/>
<path d="M-2 13 H58 V27 H-2z" fill="#c89c7a"/>
<path d="M2 14 v12 M6 14 v12 M36 14 v12 M40 14 v12 M44 14 v12 M48 14 v12 M52 14 v12" stroke="#a87a5a" stroke-width="0.8"/>
<path d="M10 10 H32 V27 H10z" fill="#f6f2ee"/>
<path d="M5 16 L20 0 L36 12 L32 15 L20 4 L9 18z" fill="#d83a30"/>
<path d="M17 -1 L36 12 L31 14 L15 2z" fill="#e44a3c"/>
<rect x="12" y="15" width="7" height="7" fill="#b48c74"/>
<path d="M12 23 h8" stroke="#8a6a58" stroke-width="1"/>
<rect x="23" y="16" width="6" height="10" fill="#cc9464"/>
<path d="M58 8 Q68 2 72 2 V14 Q62 18 56 30 Q50 44 50 72 H36 Q38 44 46 30 Q52 16 58 8z" fill="#6a90d4"/>
<path d="M60 10 Q52 22 48 34 Q44 50 44 72 M64 8 Q56 22 52 36" stroke="#b4ccf0" stroke-width="1" fill="none"/>
<path d="M-2 52 Q12 48 26 54 V72 H-2z" fill="#58b454"/>
<path d="M4 56 Q14 52 22 58 M6 62 q6 -3 12 0" stroke="#94d070" stroke-width="1.5" fill="none"/>
<path d="M58 58 Q66 56 72 58 V72 H56z" fill="#78c064"/>
<path d="M4 37 Q10 32 16 37z" fill="#d8504a"/>
<path d="M10 37 V44" stroke="#c0a080" stroke-width="0.8"/>
<path d="M25 42 L28 48 V57 H24 V48z" fill="#d84038"/>
<path d="M26 42 L24 50 L28 50z" fill="#3a58a0"/>
<path d="M31 41 L34 48 V57 H30 V48z" fill="#d84038"/>
<rect x="39" y="18" width="4" height="12" fill="#d84038"/>
<path d="M64 18 L67 26 V32 H62 V26z" fill="#d84038"/>
<path d="M64 32 V42" stroke="#d0b090" stroke-width="1"/>
<rect x="17" y="31" width="4" height="3" fill="#f0c030"/>
<path d="M20 40 q3 -1 5 1 M14 46 q3 -1 5 1 M36 36 q3 -1 5 1 M40 52 q2 -1 4 1" stroke="#c09078" stroke-width="0.8" fill="none"/>
<path d="M52 54 Q56 52 60 54 M54 60 Q58 58 62 60" stroke="#c86050" stroke-width="1" fill="none"/>
</g></svg></div>
<div class="av" id="av-niliang" style="left:96px;top:378px"><svg width="70" height="70" viewBox="0 0 70 70"><defs><filter id="bnl" filterUnits="userSpaceOnUse" x="0" y="0" width="70" height="70"><feGaussianBlur edgeMode="duplicate" stdDeviation="0.5"/></filter></defs><g filter="url(#bnl)">
<defs><linearGradient id="nls" x1="0" y1="0" x2="0" y2="1"><stop offset="0" stop-color="#1886e0"/><stop offset="1" stop-color="#5ab8ee"/></linearGradient>
<linearGradient id="nlw" x1="0" y1="0" x2="0" y2="1"><stop offset="0" stop-color="#20b4d4"/><stop offset="1" stop-color="#1088b8"/></linearGradient></defs>
<rect width="70" height="24" fill="url(#nls)"/>
<rect y="23.5" width="70" height="46.5" fill="url(#nlw)"/>
<path d="M0 26 Q20 25 40 27 V30 Q20 30 0 31z" fill="#38c4d8" opacity="0.7"/>
<path d="M22 33 Q40 28 70 32 V52 Q50 46 30 44 Q20 40 22 33z" fill="#28c8d8" opacity="0.7"/>
<path d="M33 27 Q45 22 70 22 V33 Q55 32 40 31z" fill="#2a5a30"/>
<path d="M26 30 Q40 30 50 33 Q60 35 70 34 V41 Q60 42 52 38 Q40 34 26 31z" fill="#f0ecd8"/>
<path d="M38 37 L56 33 L57 34.5 L39 39z" fill="#6a6058"/>
<path d="M23 39 Q27 36 33 37 L35 42 Q29 45 24 43z" fill="#786a60"/>
<path d="M24 38.5 Q28 37 32 38" stroke="#d8d0c8" stroke-width="0.8" fill="none"/>
<path d="M38 34 Q41 31 44 34z" fill="#2a8a40"/>
</g></svg></div>
<div class="av" id="av-kongmengrong" style="left:359px;top:378px"><svg width="70" height="70" viewBox="0 0 70 70"><defs><filter id="bkm" filterUnits="userSpaceOnUse" x="0" y="0" width="70" height="70"><feGaussianBlur edgeMode="duplicate" stdDeviation="0.8"/></filter>
<linearGradient id="kms" x1="0" y1="0" x2="0" y2="1"><stop offset="0" stop-color="#b4c4de"/><stop offset="1" stop-color="#d0d8e0"/></linearGradient></defs>
<g filter="url(#bkm)">
<rect x="-2" y="-2" width="74" height="22" fill="url(#kms)"/>
<path d="M-2 19 Q10 15 20 16 Q40 14 72 17 V30 H-2z" fill="#4e5e2a"/>
<path d="M12 14 Q18 11 24 14 V20 H12z" fill="#5a6a34"/>
<path d="M28 15 h6 v2 h-6z M40 15 h5 v2 h-5z" fill="#e0e4e8"/>
<rect x="-2" y="26" width="74" height="10" fill="#9a8848"/>
<path d="M-2 27 H28 V33 H-2z" fill="#b8a462"/>
<path d="M-2 34 Q35 30 72 33 V50 H-2z" fill="#4a5424"/>
<path d="M40 28 Q56 26 72 28 V36 H40z" fill="#6e7434"/>
<path d="M-2 38 Q20 36 40 40 V44 Q20 42 -2 44z" fill="#6e7030" opacity="0.7"/>
<path d="M-2 48 H72 V72 H-2z" fill="#4e4842"/>
<path d="M-2 50 H72 M-2 54 H72" stroke="#6e6456" stroke-width="1"/>
<path d="M-2 57 L72 57 V72 H-2z" fill="#423c38"/>
<path d="M12 30 L14 28 L16 32 L14 34z M26 30 L28 29 L30 32 L28 34z" fill="#b04038"/>
<path d="M17 48 Q24 44 32 50 L34 72 H15z" fill="#161414"/>
<path d="M46 42 Q56 44 58 52 L60 72 H45z" fill="#6e6e74"/>
<path d="M48 50 l4 4 M52 58 l4 -3 M47 62 l5 2" stroke="#2e2e32" stroke-width="1.5"/>
<path d="M33 36 Q40 33 47 38 L49 56 L46 72 H35 L33 52 Q31 44 33 36z" fill="#a4bcdc"/>
<path d="M32 40 L27 34 L29 28 L32 30 L31 34 L35 40z" fill="#a4bcdc"/>
<path d="M29 27 L32 27 L31 31z" fill="#c89878"/>
<path d="M45 44 Q49 46 48 54 L46 58 L44 56z" fill="#c89878"/>
<ellipse cx="41" cy="29" rx="4.2" ry="5" fill="#c89c80"/>
<path d="M36.5 28 Q36 22 42 22 Q47 22 46.5 28 L45.5 26 Q42 24 37.5 27z" fill="#1a1614"/>
<path d="M37.5 28.5 h7" stroke="#2a2020" stroke-width="1.1"/>
<path d="M35 64 H44 V72 H35z" fill="#28304a"/>
</g></svg></div>
<div class="av" id="av-wenkun" style="left:622px;top:378px;border-radius:50%"><div style="width:70px;height:70px;border-radius:50%;background:#0a6ef8;color:#fff;font-size:13px;line-height:72px;text-align:center;letter-spacing:-0.5px;will-change:transform">文坤</div></div>
<div class="av" id="av-liushu" style="left:886px;top:378px"><svg width="70" height="70" viewBox="0 0 70 70"><defs><filter id="bls" filterUnits="userSpaceOnUse" x="0" y="0" width="70" height="70"><feGaussianBlur edgeMode="duplicate" stdDeviation="0.8"/></filter>
<linearGradient id="lss" x1="0" y1="0" x2="0" y2="1"><stop offset="0" stop-color="#ececee"/><stop offset="1" stop-color="#b8bcc0"/></linearGradient>
<linearGradient id="lsw" x1="0" y1="0" x2="0" y2="1"><stop offset="0" stop-color="#98c0b8"/><stop offset="0.35" stop-color="#c4d0d0"/><stop offset="1" stop-color="#8c9694"/></linearGradient></defs>
<g filter="url(#bls)">
<rect x="-2" y="-2" width="74" height="32" fill="url(#lss)"/>
<path d="M5 8 Q20 5 30 11 Q45 9 60 13 Q50 17 36 15 Q20 13 5 8z" fill="#a8a8ae" opacity="0.7"/>
<path d="M24 18 L30 14 L40 20 L50 17 L60 22 V30 H24z" fill="#6e747c"/>
<rect x="-2" y="29" width="74" height="43" fill="url(#lsw)"/>
<path d="M-2 -2 H6 Q20 12 34 26 L36 31 H-2z" fill="#24321c"/>
<path d="M-2 30 H40 Q20 33 -2 35z" fill="#283820"/>
<path d="M72 13 Q60 20 52 27 L50 31 H72z" fill="#22301c"/>
<path d="M-2 35 Q20 32 40 35 L38 40 Q20 40 -2 42z" fill="#78c4b4" opacity="0.85"/>
<path d="M44 32 Q58 30 72 32 V40 Q56 38 44 36z" fill="#b0e4e0"/>
<path d="M-2 40 Q10 37 18 39 Q26 37 40 39 Q50 37 56 41 L20 45 Q8 47 -2 53z" fill="#d0ae80" opacity="0.8"/>
<path d="M-2 46 Q8 44 14 48 L6 54 L-2 56z" fill="#9a8050" opacity="0.8"/>
<path d="M10 48 Q35 40 66 46 V58 Q40 50 14 56z" fill="#dce4e4" opacity="0.6"/>
<ellipse cx="42" cy="61" rx="4.5" ry="3.5" fill="#7a5a38"/>
<path d="M33 34 Q37 32 40 34 V36 H33z" fill="#2a3038"/>
</g></svg></div>
<div class="av" id="av-redcard" style="left:359px;top:526px"><svg width="70" height="70" viewBox="0 0 70 70"><defs><filter id="brc" filterUnits="userSpaceOnUse" x="0" y="0" width="70" height="70"><feGaussianBlur edgeMode="duplicate" stdDeviation="0.4"/></filter>
<radialGradient id="rcg" cx="0.55" cy="0.5" r="0.7"><stop offset="0" stop-color="#e01e30"/><stop offset="1" stop-color="#b40c20"/></radialGradient></defs>
<g filter="url(#brc)">
<rect x="-2" y="-2" width="74" height="74" fill="#f6f4f4"/>
<path d="M3.7 3 H62 Q67 3 67 8 V67 H3.7z" fill="url(#rcg)"/>
<path d="M5 3 V67 M6.8 3 V67" stroke="#e8a050" stroke-width="0.5"/>
<g stroke="#dcb060" stroke-width="0.9" fill="none">
<path d="M26 4 l3 2 M30 3.5 v3 M33 4 l2 2 l-2 1 M37 3.5 q2 1 0 3 M41 4 h3 v2 M46 3.5 l2 3 M50 4 v2"/>
<path d="M27 13 l2 4 M30 12 q2 2 -1 5 M33 14 h4 M35 12 v6 M39 13 l4 4 M43 12 l-3 5 M46 13 h4 v4 M48 12 v6"/>
</g>
<path d="M26 33 Q24 29 27 27.5 Q31 27 32 31 Q33 36 34 40 Q36 48 44 50 L44 48 Q40 38 46 33 Q54 28 61 36 Q58 46 50 50 Q48 58 40 60 Q32 60 27 54 Q23 46 26 37z" fill="#d8a850" opacity="0.55"/>
<g stroke="#dcb060" fill="none">
<path d="M26 33 Q24 29 27 27.5 Q31 27 32 31 Q33 36 34 40 Q36 48 44 50" stroke-width="2.2"/>
<path d="M25 30 l-3 -2 M26 28 l-2 -3 M28 27 l0 -3 M30 27.5 l2 -3" stroke-width="1.1"/>
<path d="M26 37 Q23 46 27 54 Q32 60 40 60 Q48 58 50 50" stroke-width="2.4"/>
<path d="M30 42 Q28 50 34 54 Q40 56 44 52" stroke-width="1.2"/>
<circle cx="34" cy="48" r="2.4" stroke-width="1"/>
<path d="M44 48 Q40 38 46 33 Q54 28 61 36" stroke-width="2"/>
<path d="M46 50 Q44 42 50 38 Q56 36 59 42" stroke-width="1.4"/>
<path d="M48 52 Q48 46 53 44 Q57 44 58 48" stroke-width="1.2"/>
<path d="M38 60 L37 67 M42 59 L43 67" stroke-width="1.4"/>
</g>
<path d="M46 49 H70 V70 H46z" fill="#f8f8f8"/>
<path d="M50 52 Q58 50 69 53 V68 Q58 65 50 68z" fill="#e52a28"/>
<path d="M53 56 l0.8 1.6 1.8 0.2-1.3 1.2 0.4 1.8-1.7-0.9-1.6 0.9 0.3-1.8-1.3-1.2 1.8-0.2z" fill="#f8d020"/>
<circle cx="57.5" cy="55" r="0.6" fill="#f8d020"/><circle cx="59" cy="57.5" r="0.6" fill="#f8d020"/><circle cx="59" cy="60.5" r="0.6" fill="#f8d020"/><circle cx="57.5" cy="62.5" r="0.6" fill="#f8d020"/>
</g></svg></div>
<div class="av" id="av-sunglasses" style="left:622px;top:526px"><svg width="70" height="70" viewBox="0 0 70 70"><defs><filter id="bsg" filterUnits="userSpaceOnUse" x="0" y="0" width="70" height="70"><feGaussianBlur edgeMode="duplicate" stdDeviation="0.7"/></filter>
<linearGradient id="sgs" x1="0" y1="0" x2="0" y2="1"><stop offset="0" stop-color="#a4c8ee"/><stop offset="1" stop-color="#dce8f2"/></linearGradient></defs>
<g filter="url(#bsg)">
<rect x="-2" y="-2" width="74" height="74" fill="url(#sgs)"/>
<path d="M4 8 Q16 5 26 10 Q14 12 4 11z" fill="#eef4fa" opacity="0.8"/>
<path d="M-2 34 Q6 30 14 34 L14 46 H-2z" fill="#4a8a44"/>
<path d="M4 18 V44" stroke="#d0d8e0" stroke-width="1"/>
<path d="M27 -2 H34 V70 H27z" fill="#f2f2ea"/>
<path d="M33 -2 H72 V28 Q52 30 36 36z" fill="#e8e2da"/>
<path d="M35 -2 L41 -2 L35 20z" fill="#c04050"/>
<path d="M36 0 L44 0 L38 30z" fill="#8a8480" opacity="0.6"/>
<path d="M56 6 Q60 3 64 6 M52 14 Q56 11 59 14 M48 22 Q52 20 55 22" stroke="#8a7a70" stroke-width="1" fill="none"/>
<path d="M36 34 L72 27 V62 L34 62z" fill="#a89c94"/>
<path d="M40 34 V62 M48 32 V62 M56 31 V62 M64 29 V62" stroke="#c8bcb4" stroke-width="1.3"/>
<path d="M38 46 H72" stroke="#e0d8d0" stroke-width="1"/>
<path d="M46 22 Q58 23 72 28 V42 Q64 40 60 38 Q54 30 46 22z" fill="#e42a30"/>
<path d="M60 58 H72 V72 H60z" fill="#e0e0e0"/>
<path d="M12 23 Q12 9 25 9 Q37 9 37 23 V33 Q34 43 25 44 Q15 43 13 33z" fill="#dcc0a8"/>
<path d="M13 18 Q16 8 25 9 Q34 9 37 17 Q31 12 24 12 Q18 12 13 18z" fill="#5a4a40"/>
<path d="M12 21 H37 V26 Q32 28 26 25 Q20 28 13 26z" fill="#2a2626"/>
<path d="M21 36 Q25 35 29 36" stroke="#9a6a5a" stroke-width="1" fill="none"/>
<path d="M-2 49 Q10 44 20 43 Q26 46 32 44 Q44 46 54 54 L62 62 V72 H-2z" fill="#ecf0f4"/>
<path d="M18 46 Q26 50 34 46 L32 72 H20z" fill="#f6f6f6"/>
<path d="M30 46 Q34 44 38 48" stroke="#8890a0" stroke-width="1" fill="none"/>
<path d="M6 58 L8 72 M44 56 L50 72" stroke="#c4ccd4" stroke-width="1"/>
</g></svg></div>

<!-- SPEAKING OVERLAY -->
<div class="abs" style="left:854.5px;top:119px;width:176px;height:26px;background:#303030"></div>
<svg class="abs" style="left:862px;top:124px" width="20" height="16" viewBox="862 124 20 16">
 <rect x="866.8" y="125.8" width="4" height="7.2" rx="2" fill="#8a8a8a"/>
 <path d="M865 130.6c0 2.4 1.7 4.2 3.8 4.2s3.8-1.8 3.8-4.2" fill="none" stroke="#8a8a8a" stroke-width="0.9"/>
 <path d="M868.8 134.8v2.4" stroke="#8a8a8a" stroke-width="0.9"/>
 <path d="M864.4 137.2L873.6 126.4" stroke="#d25a4c" stroke-width="1"/>
 <path d="M879.8 123.2V140.2" stroke="#222" stroke-width="1"/>
</svg>
<div class="t" style="left:886.5px;top:127.5px;font-size:9px;letter-spacing:-0.3px;color:#e6e6e6">正在讲话: 刘伎昭:</div>

<!-- FLOAT CHAT -->
<div class="abs" style="left:8.5px;top:565px;width:62.5px;height:21px;border-radius:3px;background:#303030"></div>
<svg class="abs" style="left:8px;top:564px" width="64" height="23" viewBox="8 564 64 23">
 <circle cx="19.9" cy="575.2" r="6.1" fill="#a6a6a6"/>
 <rect x="17.2" y="572.8" width="1.2" height="1.4" fill="#303030"/>
 <rect x="21.3" y="572.8" width="1.2" height="1.4" fill="#303030"/>
 <path d="M16.8 575.8 Q19.9 579.4 23 575.8" fill="none" stroke="#303030" stroke-width="1"/>
 <path d="M32.7 570.6 H43.9 V579.2 H35 L33 581 V579.2 H32.7z" fill="#a6a6a6"/>
 <rect x="34.8" y="574.1" width="1.4" height="1.4" fill="#303030"/>
 <rect x="37.6" y="574.1" width="1.4" height="1.4" fill="#303030"/>
 <rect x="40.4" y="574.1" width="1.4" height="1.4" fill="#303030"/>
 <path d="M51.5 568.3 V582.4" stroke="#4a4a4a" stroke-width="1"/>
 <path d="M63.8 572.9 V578.2 L59.3 575.55z" fill="#a6a6a6"/>
</svg>

<div id="bottombar" class="abs"></div>
<svg class="abs" style="left:0;top:626px" width="1053" height="47" viewBox="0 626 1053 47">
 <!-- mic off -->
 <rect x="27.3" y="635.8" width="5.6" height="10" rx="2.8" fill="#f2f2f2"/>
 <path d="M24.8 642.2c0 3.2 2.4 5.6 5.3 5.6s5.3-2.4 5.3-5.6" fill="none" stroke="#f2f2f2" stroke-width="1.3"/>
 <path d="M30.1 647.8v3.4" stroke="#f2f2f2" stroke-width="1.3"/>
 <path d="M23.2 650.8L37.2 636.6" stroke="#e5534b" stroke-width="1.4"/>
 <path d="M50.7 651.2h5.7l-2.85-4z" fill="#f0f0f0"/>
 <!-- video off -->
 <rect x="69" y="639" width="13" height="12.5" rx="1" fill="#f2f2f2"/>
 <path d="M82 643.2l5.2-3v9.8l-5.2-3z" fill="#f2f2f2"/>
 <path d="M69.8 651.8L84.5 637.3" stroke="#292929" stroke-width="2.6"/>
 <path d="M69.8 651.8L84.5 637.3" stroke="#e5534b" stroke-width="1.3"/>
 <path d="M97.4 651.2h5.7l-2.85-4z" fill="#f0f0f0"/>
 <!-- share screen -->
 <rect x="403.5" y="638.4" width="14.4" height="9.8" rx="0.8" fill="#f2f2f2"/>
 <rect x="406" y="649.6" width="9.4" height="1.3" fill="#f2f2f2"/>
 <path d="M407.5 645.8c0.3-2.4 1.8-3.8 4.6-3.8v-1.6l3 2.6-3 2.6v-1.6c-1.9 0-3.4 0.5-4.6 1.8z" fill="#292929"/>
 <path d="M430.6 650.9h5.3l-2.65-3.6z" fill="#f0f0f0"/>
 <!-- invite -->
 <circle cx="456.6" cy="641.6" r="3.6" fill="#f2f2f2"/>
 <path d="M451 650.6c0-3.2 2.5-5 5.6-5 1.3 0 2.4 0.3 3.3 0.8-0.8 1-1.3 2.4-1.3 4.2z" fill="#f2f2f2"/>
 <circle cx="464" cy="646.5" r="4.3" fill="#f2f2f2"/>
 <circle cx="464" cy="646.5" r="3" fill="#292929"/>
 <path d="M464 644.6v3.8M462.1 646.5h3.8" stroke="#f2f2f2" stroke-width="1.1"/>
 <!-- members -->
 <circle cx="496" cy="641.8" r="3.8" fill="#f2f2f2"/>
 <path d="M489.7 650.6c0-3.4 2.8-5.4 6.3-5.4s6.3 2 6.3 5.4z" fill="#f2f2f2"/>
 <path d="M502.5 638.6c1.8 0.2 2.8 1.6 2.8 3.4 0 1.3-0.6 2.3-1.4 2.9 1.8 0.8 3.1 2.9 3.1 5.6h-2.6c0-2.4-0.8-4-2.3-4.9 0.9-0.8 1.4-2 1.4-3.6 0-1.3-0.4-2.4-1-3.4z" fill="#f2f2f2"/>
 <!-- chat -->
 <path d="M531.2 638h13.8v10.2h-10.2l-3.6 2.4z" fill="#f2f2f2"/>
 <rect x="534.3" y="642.2" width="1.6" height="1.6" fill="#292929"/>
 <rect x="537.3" y="642.2" width="1.6" height="1.6" fill="#292929"/>
 <rect x="540.3" y="642.2" width="1.6" height="1.6" fill="#292929"/>
 <!-- record -->
 <circle cx="577" cy="644.4" r="7" fill="none" stroke="#f2f2f2" stroke-width="1.2"/>
 <circle cx="577" cy="644.4" r="5" fill="#f2f2f2"/>
 <!-- apps -->
 <path d="M609.2 637.3l3.3 3.3-3.3 3.3-3.3-3.3z" fill="none" stroke="#f2f2f2" stroke-width="1.1"/>
 <rect x="614.3" y="637" width="6.6" height="6.6" fill="#f2f2f2"/>
 <rect x="605.9" y="645" width="6.6" height="6.6" fill="#f2f2f2"/>
 <rect x="614.3" y="645" width="6.6" height="6.6" fill="#f2f2f2"/>
 <!-- settings -->
 <path d="M651 636.8l6.6 3.8v7.6l-6.6 3.8-6.6-3.8v-7.6z" fill="#f2f2f2"/>
 <circle cx="651" cy="644.4" r="3.2" fill="#292929"/>
 <circle cx="651" cy="644.4" r="2" fill="#f2f2f2"/>
 <!-- leave -->
 <rect x="981.5" y="636.5" width="60" height="25" rx="1.5" fill="none" stroke="#b33a36" stroke-width="1"/>
</svg>
<div class="t bl" style="left:15px;top:656px">解除静音</div>
<div class="t bl" style="left:63px;top:656px">开启视频</div>
<div class="t bl" style="left:396px;top:656px">共享屏幕</div>
<div class="t bl" style="left:444.5px;top:656px">邀请参会</div>
<div class="t bl" style="left:484px;top:656px">成员(14)</div>
<div class="t bl" style="left:523px;top:656px">会中聊天</div>
<div class="t bl" style="left:569.5px;top:656px">录制</div>
<div class="t bl" style="left:606px;top:656px">应用</div>
<div class="t bl" style="left:644px;top:656px">设置</div>
<div class="t" style="left:991.5px;top:644.5px;font-size:10px;letter-spacing:-0.3px;color:#e0493f">离开会议</div>

<div id="taskbar" class="abs"></div>
<div class="abs" style="left:34px;top:673px;width:241px;height:28px;background:#ffffff;border-right:1px solid #d4d4d4;border-bottom:1px solid #d0d0d0"></div>
<svg class="abs" style="left:0;top:673px" width="1053" height="28" viewBox="0 673 1053 28">
 <!-- win logo -->
 <path d="M11.2 683.2l4.6-0.7v4.8h-4.6z M16.6 682.4l6-1v5.9h-6z M11.2 688.1h4.6v4.7l-4.6-0.7z M16.6 688.1h6v4.7 l-6-0.9z" fill="#0a0a0a"/>
 <!-- search -->
 <circle cx="50.2" cy="684.3" r="3.8" fill="none" stroke="#222" stroke-width="1.1"/>
 <path d="M47.5 687l-5.6 5.6" stroke="#222" stroke-width="1.2"/>
 <!-- cortana -->
 <circle cx="292" cy="686.7" r="4.6" fill="none" stroke="#111" stroke-width="1.3"/>
 <!-- task view -->
 <path d="M320.2 682.3h7.7M320.2 691.6h7.7" stroke="#111" stroke-width="1.2"/>
 <path d="M320.7 682v10M327.4 682v10" stroke="#111" stroke-width="0.8"/>
 <path d="M330.1 682v10" stroke="#111" stroke-width="0.9"/>
 <circle cx="330.1" cy="685.6" r="0.8" fill="#111"/>
 <!-- edge -->
 <circle cx="361.6" cy="687.4" r="8.3" fill="#1a8ad6"/>
 <path d="M354 684c2.5-5.5 11-6.5 14.5-1.8 1.6 2.2 1.4 4.6-0.6 5.6-2 1-5.6 0.2-6.6-1.8 1.4-0.2 2.6-0.6 2.6-1.8 0-2.2-4.4-3.2-7.6-1.6-1.3 0.6-2 1.2-2.3 1.4z" fill="#57d36d"/>
 <path d="M356.6 685.6c-1.5 3.6 1 8.6 6 9 2.2 0.2 4.6-0.6 6.2-2-3 0.8-6.8-0.2-8.6-3-1-1.4-1-3.4-0.2-4.8-1.2 0-2.8 0.2-3.4 0.8z" fill="#0f5ea8"/>
 <!-- explorer -->
 <path d="M388 680.6h6l1.5 1.6h8.5v12.4h-16z" fill="#f3c444"/>
 <rect x="388" y="684.2" width="16" height="10.4" fill="#ffd96a"/>
 <rect x="393.5" y="689" width="5" height="5.6" fill="#2d7fd0"/>
 <!-- wps -->
 <path d="M421.5 680.5h3.2l2.6 9.4 2.5-9.4h3l2.4 9.4 2.6-9.4h3.2l-4.2 14.4h-3l-2.6-8.6-2.6 8.6h-3z" fill="#e2322a"/>
 <!-- notepad -->
 <path d="M457 682l11-2.2 4.2 12.4-11.4 3z" fill="#8fc7e0"/>
 <path d="M456 683.5l4.8 11.7 1.4-0.3-4.6-11.6z" fill="#4a6f86"/>
 <path d="M459.5 682l8-1.6 3.6 10.8-8.4 2.2z" fill="#d9eef5"/>
 <!-- wecom icon -->
 <path d="M498 680.4c-3.9 0-6.8 2.7-6.8 6 0 1.6 0.7 3 1.8 4.1l-0.6 2.2 2.4-1.1c1 0.5 2.1 0.8 3.2 0.8" fill="none" stroke="#2a8ff0" stroke-width="1.7"/>
 <path d="M504.8 686.4c0-3.3-2.9-6-6.8-6" fill="none" stroke="#2a8ff0" stroke-width="1.7"/>
 <circle cx="503.6" cy="687.2" r="1.4" fill="#3cc060"/>
 <circle cx="506.4" cy="689.6" r="1.4" fill="#2a9af0"/>
 <circle cx="503.8" cy="692.4" r="1.4" fill="#f28a2a"/>
 <circle cx="501" cy="689.8" r="1.4" fill="#f6c23a"/>
 <!-- tencent meeting active -->
 <rect x="516.6" y="673" width="33.6" height="28" fill="#e6eff5"/>
 <rect x="525" y="678.2" width="17" height="17.3" rx="2.5" fill="#3283ea"/>
 <rect x="528" y="681.9" width="11" height="10.4" rx="1" fill="#eef4fc"/>
 <path d="M530.2 688.2l1.8-2 1.6 1.6 1.6-1.6 1.8 2" fill="none" stroke="#3283ea" stroke-width="1.1"/>
 <!-- IM app -->
 <rect x="560" y="678.7" width="16" height="16.3" rx="2.5" fill="#fbfcfe"/>
 <path d="M563.6 683v8.3h1.6v-8.3z M572.6 683v8.3h1.6v-8.3z" fill="#4a50b8"/>
 <path d="M566.2 691.3v-6.4l2.8 3.6 2.8-3.6v6.4" fill="none" stroke="#4a50b8" stroke-width="1.3"/>
 <!-- underlines -->
 <rect x="382" y="699" width="23" height="2" fill="#1f73c8"/>
 <rect x="416" y="699" width="29" height="2" fill="#1f73c8"/>
 <rect x="450" y="699" width="29" height="2" fill="#1f73c8"/>
 <rect x="485.2" y="699" width="27.7" height="2" fill="#1f73c8"/>
 <rect x="517" y="699" width="33" height="2" fill="#1f73c8"/>
 <rect x="554.2" y="699" width="27.7" height="2" fill="#1f73c8"/>
 <!-- tray -->
 <path d="M804.2 690.8l4.6-5.2 4.6 5.2" fill="none" stroke="#222" stroke-width="1"/>
 <rect x="825.7" y="680.8" width="11.2" height="11.4" fill="#fafcfd"/>
 <path d="M831 682.6c-2.4 0-4.2 1.6-4.2 3.7 0 1 0.4 1.9 1.1 2.6l-0.4 1.4 1.5-0.7c0.6 0.3 1.3 0.4 2 0.4 2.4 0 4.2-1.6 4.2-3.7s-1.8-3.7-4.2-3.7z" fill="none" stroke="#1f7cf2" stroke-width="1.2"/>
 <path d="M833 688.4l2.6 1.4-1.2 1.8-2-1z" fill="#f6a623"/>
 <path d="M847.6 685.4h2l3-2.6v9.6l-3-2.6h-2z" fill="none" stroke="#222" stroke-width="0.9"/>
 <path d="M854.8 685.2c0.8 0.8 0.8 3.8 0 4.6M857 683.6c1.6 1.6 1.6 6.6 0 8.2M859.2 682.2c2.2 2.4 2.2 8.8 0 11" fill="none" stroke="#222" stroke-width="0.9"/>
 <rect x="874.2" y="679.8" width="3.8" height="8.2" rx="1.9" fill="#111"/>
 <path d="M872.4 685.6c0 2.2 1.6 3.8 3.7 3.8s3.7-1.6 3.7-3.8M876.1 689.4v2.8M873.6 692.6h5" fill="none" stroke="#111" stroke-width="1"/>
 <rect x="893.2" y="682.6" width="16" height="8.8" rx="1" fill="none" stroke="#333" stroke-width="1"/>
 <path d="M895.4 685h1.4M898 685h1.4M900.6 685h1.4M903.2 685h1.4M905.8 685h1.4M895.4 687.2h1.4M898 687.2h1.4M900.6 687.2h1.4M903.2 687.2h1.4M905.8 687.2h1.4M897.4 689.2h7.6" stroke="#555" stroke-width="0.8"/>
 <!-- IM tray -->
 <path d="M991.8 680.4l2.3 0.8v10.6h-2.3z M1006.1 680.4l-2.3 0.8v10.6h2.3z" fill="#111"/>
 <path d="M996.3 691.8v-7.6l2.7 4.4 2.7-4.4v7.6" fill="none" stroke="#111" stroke-width="1.6"/>
 <!-- notification -->
 <path d="M1025 681.3h10.2q0.8 0 0.8 0.8v8.6q0 0.8-0.8 0.8h-3.8l-1.5 1.4-1.5-1.4h-3.4q-0.8 0-0.8-0.8v-8.6q0-0.8 0.8-0.8z" fill="none" stroke="#333" stroke-width="0.9"/>
</svg>
<div class="t" style="left:61.5px;top:681.5px;font-size:11px;letter-spacing:0.25px;color:#333">在这里输入你要搜索的内容</div>
<div class="t" style="left:918.5px;top:682px;font-size:10px;color:#111">中</div>
<div class="t" style="left:946px;top:676.5px;font-size:9.5px;color:#111">10:19</div>
<div class="t" style="left:935.5px;top:688px;font-size:9.5px;color:#111">2022/1/12</div>

</body></html>
